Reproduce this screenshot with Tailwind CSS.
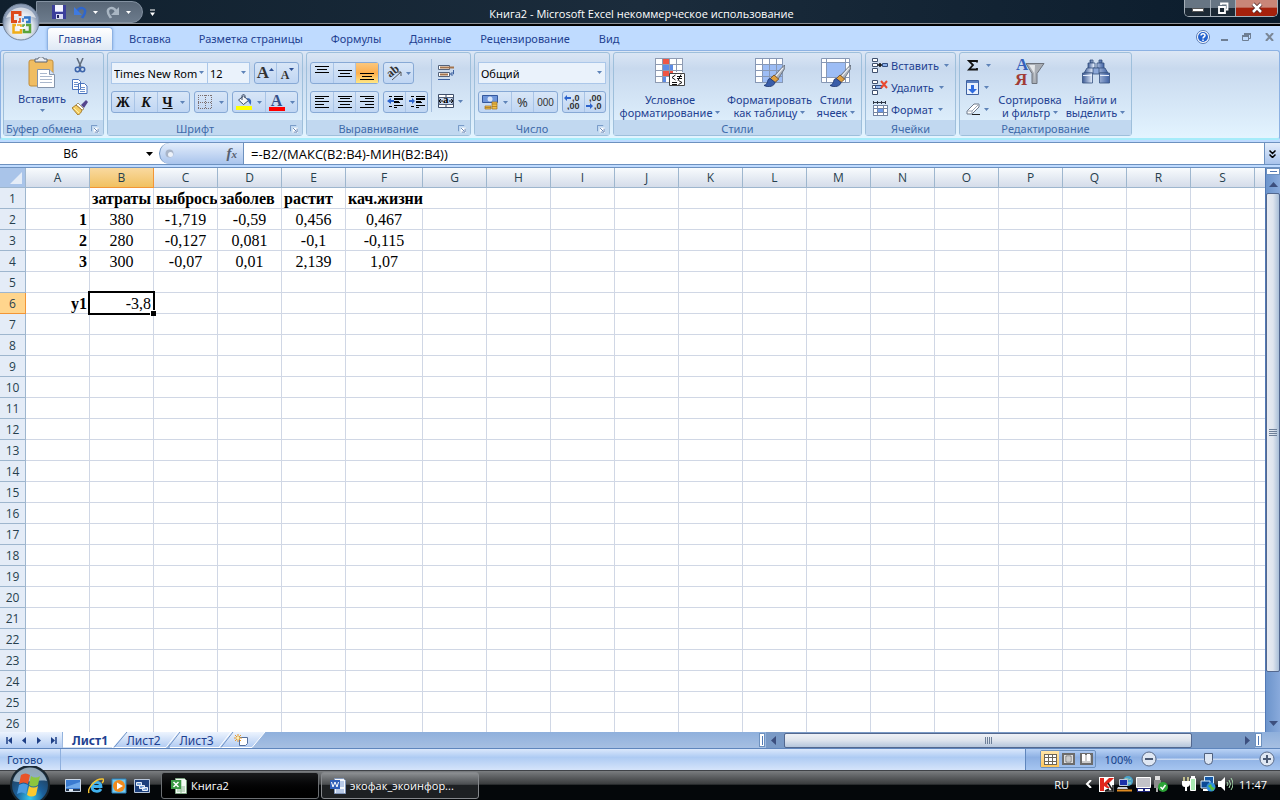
<!DOCTYPE html>
<html lang="ru">
<head>
    <meta charset="UTF-8">
    <meta name="viewport" content="width=device-width, initial-scale=1.0">
    <title>Книга2 - Microsoft Excel</title>
    <script src="https://cdn.jsdelivr.net/npm/@tailwindcss/browser@4"></script>
</head>
<body class="h-screen flex flex-col overflow-hidden bg-black font-['Noto_Sans',sans-serif] text-[11px] leading-[13px] text-[#1e4191]">

    <!-- shared icons -->
    <svg class="hidden">
        <defs>
            <symbol id="arrow" viewBox="0 0 5 3"><path d="M0 0h5L2.500 3z" fill="currentColor"/></symbol>
            <symbol id="launcher" viewBox="0 0 9 9"><path d="M.5 7V.5H7" fill="none" stroke="#6b8fc0"/><path d="M3 3h6v6H3z" fill="#fff"/><path d="M3.500 3.500l3.500 3.500M8 4v4H4" fill="none" stroke="#5579ae"/></symbol>
            <symbol id="brush" viewBox="0 0 20 21"><path d="M19.500 0L9 11l4 3L20 3z" fill="#aeb4bd" stroke="#5f6875" stroke-width=".8"/><path d="M18 3L11 11" stroke="#f2f4f7"/><path d="M9.500 9.500L6 13l4 4 4-3.500z" fill="#dfa03f" stroke="#6d4720" stroke-width=".8"/><path d="M6 13c-4 0-1 5-6 6.500 5 2.500 10 .500 10.500-3z" fill="#3a5da8" stroke="#1f376f" stroke-width=".8"/></symbol>
            <symbol id="cells" viewBox="0 0 16 15"><path d="M.5.5h5v3h-5zM.5 5.500h5v3h-5zM.5 10.500h5v4h-5z" fill="#fff" stroke="#40516e"/></symbol>
        </defs>
    </svg>

    <!-- title bar -->
    <header class="relative flex h-[26px] shrink-0 border-b-2 border-black bg-linear-to-r from-[#10202e] via-[#1b2c3c] to-[#0b1c2c]">
        <div class="flex h-[24px] w-full items-start border-b border-[#8d9299]">
            <div class="ml-[36px] mt-px flex h-[22px] w-[107px] items-center rounded-r-full border border-[#8391a1] bg-linear-to-b from-[#596777] to-[#6c7b8c] pl-[15px] text-white">
                <button aria-label="Сохранить">
                    <svg width="14" height="14"><path d="M0 0h14v14H0z" fill="#3c3f9c"/><path d="M3 0h8v7H3z" fill="#f4f5ff"/><path d="M3 6h8v1H3z" fill="#b9bce9"/><path d="M4 9h7v5H4z" fill="#d9dbf6"/><path d="M5 10h2v3H5z" fill="#22245e"/></svg>
                </button>
                <button aria-label="Отменить" class="ml-[8px] flex items-center gap-[6px]">
                    <svg width="13" height="13"><path d="M3 5C6 0 12 2 11 6c0 3-2 4-3 6" fill="none" stroke="#2f66cc" stroke-width="2.500"/><path d="M0 1v8h8z" fill="#3f7ae0"/></svg>
                    <svg width="5" height="3"><use href="#arrow"/></svg>
                </button>
                <button aria-label="Вернуть" class="ml-[8px] flex items-center gap-[7px]">
                    <svg width="13" height="13"><path d="M10 5C7 0 1 2 2 6c0 3 2 4 3 6" fill="none" stroke="#a9b6c3" stroke-width="2.500"/><path d="M13 1v8H5z" fill="#a9b6c3"/></svg>
                    <svg width="5" height="3"><use href="#arrow"/></svg>
                </button>
            </div>
            <button aria-label="Настройка панели" class="ml-[7px] mt-[9px]"><svg width="5" height="7"><path d="M0 1h5" stroke="#fff"/><path d="M0 3.500h5L2.500 7z" fill="#fff"/></svg></button>
            <h1 class="min-w-0 flex-1 truncate pt-[6px] pr-[56px] text-center text-[11px] leading-[16px] text-white font-['Open_Sans',sans-serif]">Книга2 - Microsoft Excel некоммерческое использование</h1>
            <div class="mr-[2px] flex h-[17px] overflow-hidden rounded-b-[5px] border border-t-0 border-[#a5afb8]">
                <button aria-label="Свернуть" class="flex w-[26px] items-center justify-center border-r border-[#a5afb8] bg-linear-to-b from-[#677583] from-50% to-[#1c2935] to-50%"><svg width="12" height="14"><path d="M.5 7.500h11v3H.5z" fill="#fff" stroke="#555"/></svg></button>
                <button aria-label="Восстановить" class="flex w-[25px] items-center justify-center border-r border-[#a5afb8] bg-linear-to-b from-[#677583] from-50% to-[#1c2935] to-50%"><svg width="12" height="12"><path d="M4 3V1.500h6.500v6H9M2 5h6v6H2z" fill="none" stroke="#fff" stroke-width="1.800"/></svg></button>
                <button aria-label="Закрыть" class="flex w-[41px] items-center justify-center bg-linear-to-b from-[#c98678] from-45% to-[#a5210c] to-50%"><svg width="12" height="12"><path d="M2 2l8 8M10 2l-8 8" stroke="#4b2020" stroke-width="4"/><path d="M2 2l8 8M10 2l-8 8" stroke="#fff" stroke-width="2.500"/></svg></button>
            </div>
        </div>
        <button aria-label="Кнопка Office" class="absolute left-[2px] top-[3px] z-20">
            <svg width="38" height="38" viewBox="0 0 38 38">
                <defs><radialGradient id="orb" cx=".5" cy=".65"><stop offset="0" stop-color="#fff"/><stop offset=".65" stop-color="#dfe5ee"/><stop offset="1" stop-color="#8c9db6"/></radialGradient></defs>
                <circle cx="19" cy="19" r="18" fill="url(#orb)" stroke="#75869e"/>
                <path d="M4 15C9 1 29 1 34 15c-8-3-22-3-30 0z" fill="#fff" opacity=".6"/>
                <g fill="none" stroke-width="3">
                    <path d="M18 13V9.500h-7.500v9H15" stroke="#dd4b1c"/><path d="M22 14.500h5.500V19H24" stroke="#3277c9" stroke-width="2.500"/>
                    <path d="M14 22h-2.500v7.500H19V26" stroke="#f0ad18" stroke-width="2.500"/><path d="M24 22h4v7h-6v-3" stroke="#5aa43a" stroke-width="2.500"/>
                    <path d="M18 15v4h-2" stroke="#dd4b1c" stroke-width="1.500"/><path d="M21 15v4" stroke="#3277c9" stroke-width="1.500"/><path d="M15 22h4v2" stroke="#f0ad18" stroke-width="1.500"/><path d="M21 24v-2h2" stroke="#5aa43a" stroke-width="1.500"/>
                </g>
            </svg>
        </button>
    </header>

    <!-- ribbon tabs -->
    <nav class="flex h-[24px] shrink-0 items-end bg-[#bfdbff] pl-[47px]">
        <a href="#" class="h-[23px] w-[66px] rounded-t-[4px] border border-b-0 border-[#8db2e3] bg-linear-to-b from-white to-[#dfe9f5] pt-[4px] text-center shadow-[0_0_3px_#7fa8e0]">Главная</a>
        <a href="#" class="h-[23px] pt-[5px] pl-[16px]">Вставка</a>
        <a href="#" class="h-[23px] pt-[5px] pl-[28px]">Разметка страницы</a>
        <a href="#" class="h-[23px] pt-[5px] pl-[28px]">Формулы</a>
        <a href="#" class="h-[23px] pt-[5px] pl-[28px]">Данные</a>
        <a href="#" class="h-[23px] pt-[5px] pl-[29px]">Рецензирование</a>
        <a href="#" class="h-[23px] pt-[5px] pl-[29px]">Вид</a>
        <div class="ml-auto flex h-[23px] items-center pr-[6px] pb-[3px]">
            <button aria-label="Справка"><svg width="14" height="14"><circle cx="7" cy="7" r="6.500" fill="#fff" stroke="#5679b4"/><circle cx="7" cy="7" r="5" fill="#2563cf"/><path d="M5 5.500C5 3 9 3 9 5.500 9 7 7 6.500 7 8.500M7 9.500v1.500" fill="none" stroke="#fff" stroke-width="1.500"/></svg></button>
            <button aria-label="Свернуть книгу" class="ml-[11px]"><svg width="7" height="10"><path d="M0 8h7" stroke="#6f7f94" stroke-width="2"/></svg></button>
            <button aria-label="Восстановить книгу" class="ml-[14px]"><svg width="9" height="8"><path d="M2.500 2V.5h6v5H7M.5 2.500h6v5h-6z" fill="none" stroke="#6f7f94"/><path d="M2 1h7M0 3h7" stroke="#6f7f94" stroke-width="2"/></svg></button>
            <button aria-label="Закрыть книгу" class="ml-[14px]"><svg width="9" height="8"><path d="M1 0l7 8M8 0L1 8" stroke="#7b8796" stroke-width="2"/></svg></button>
        </div>
    </nav>

    <!-- ribbon -->
    <main class="flex min-h-0 flex-1 flex-col bg-[#bfdbff]">
    <div class="flex h-[90px] shrink-0 gap-[3px] rounded-[3px] border border-[#8db2e3] border-b-2 border-b-[#a5ecfa] bg-linear-to-b from-[#dce7f5] via-[#c8d9ee] via-20% to-[#e3f4ff] px-[2px] pt-px pb-[2px]">

        <section class="flex w-[101px] flex-col rounded-[3px] border border-[#9ebfdb]">
            <div class="flex flex-1 pt-[4px]">
                <button class="flex w-[76px] flex-col items-center">
                    <svg width="28" height="32"><rect x="1" y="3" width="24" height="26" rx="2" fill="#f0bd62" stroke="#c08d3d"/><path d="M7 5V2h3c0-3 6-3 6 0h3v3z" fill="#e9ecf1" stroke="#5b6574"/><path d="M9.500 12.500h12l5 5v13h-17z" fill="#fff" stroke="#8494ab"/><path d="M21.500 12.500v5h5" fill="#d6e2f3" stroke="#8494ab"/><path d="M12 16.500h7M12 19.500h12M12 22.500h12M12 25.500h12" stroke="#aab8cd"/></svg>
                    <span class="mt-[3px]">Вставить</span>
                    <svg class="mt-[4px] text-[#5e83b8]" width="5" height="3"><use href="#arrow"/></svg>
                </button>
                <div class="-ml-[8px] flex flex-col items-center gap-[6px] pt-px">
                    <button aria-label="Вырезать"><svg width="12" height="15"><path d="M3 0l4 9M9 0L5 9" stroke="#606c7c" stroke-width="1.500"/><circle cx="3.500" cy="11.500" r="2.200" fill="none" stroke="#3c64aa" stroke-width="1.500"/><circle cx="8.500" cy="11.500" r="2.200" fill="none" stroke="#3c64aa" stroke-width="1.500"/></svg></button>
                    <button aria-label="Копировать"><svg width="16" height="15"><path d="M.5.500h6l2 2v8h-8zM6.500 4.500h6l2.500 2.500v7.500H6.500z" fill="#fff" stroke="#4a74bd"/><path d="M2 3.500h4M2 5.500h4M2 7.500h4M8 8.500h5M8 10.500h5M8 12.500h5" stroke="#6e92cd"/></svg></button>
                    <button aria-label="Формат по образцу"><svg width="16" height="15"><path d="M9 5l5-5 2 2-4 6z" fill="#54458c"/><path d="M6 3l6 6-2 1-6-5z" fill="#fff" stroke="#8a733a" stroke-width=".7"/><path d="M4 5l6 5c-1 3-2 4-4 5L0 8z" fill="#f4ce65" stroke="#a77f2f"/><path d="M2 8l5 5" stroke="#fff2a8"/></svg></button>
                </div>
            </div>
            <footer class="flex h-[15px] items-center justify-between bg-[#c1d8f0] pt-[2px] pl-[2px] pr-[4px] text-[#3e6aaa]"><span>Буфер обмена</span><button aria-label="Параметры буфера"><svg width="8" height="8"><use href="#launcher"/></svg></button></footer>
        </section>

        <section class="flex w-[196px] flex-col rounded-[3px] border border-[#9ebfdb]">
            <div class="flex flex-1 flex-col gap-[7px] px-[3px] pt-[9px]">
                <div class="flex gap-[4px]">
                    <div class="flex">
                        <label class="relative"><select aria-label="Шрифт" class="h-[22px] w-[97px] appearance-none border border-[#abc7e9] bg-[#eaf2fb] pl-[2px] text-black"><option>Times New Rom</option></select><svg class="pointer-events-none absolute right-[4px] top-[9px] text-[#5e83b8]" width="5" height="3"><use href="#arrow"/></svg></label>
                        <label class="relative"><select aria-label="Размер шрифта" class="h-[22px] w-[42px] appearance-none border border-l-0 border-[#abc7e9] bg-[#eaf2fb] pl-[2px] text-black"><option>12</option></select><svg class="pointer-events-none absolute right-[4px] top-[9px] text-[#5e83b8]" width="5" height="3"><use href="#arrow"/></svg></label>
                    </div>
                    <div class="flex h-[22px] divide-x divide-[#a9c4e6] rounded-[3px] border border-[#87a9d5] bg-linear-to-b from-[#d8e6f7] to-[#c0d6f3] font-['Liberation_Serif',serif] font-bold text-[#333]">
                        <button aria-label="Увеличить размер" class="flex w-[22px] items-center justify-center text-[17px] leading-[20px]">A<svg class="mb-[8px]" width="5" height="3"><path d="M0 3h5L2.500 0z" fill="#2c4f94"/></svg></button>
                        <button aria-label="Уменьшить размер" class="flex w-[21px] items-center justify-center text-[12px]"><span class="mt-[4px]">A</span><svg class="mb-[8px]" width="5" height="3"><path d="M0 0h5L2.500 3z" fill="#2c4f94"/></svg></button>
                    </div>
                </div>
                <div class="flex gap-[4px]">
                    <div class="flex h-[22px] w-[79px] divide-x divide-[#a9c4e6] rounded-[3px] border border-[#87a9d5] bg-linear-to-b from-[#d8e6f7] to-[#c0d6f3] font-['Liberation_Serif',serif] text-[14px] font-bold text-[#111]">
                        <button class="w-[23px]">Ж</button>
                        <button class="w-[23px] italic">К</button>
                        <button class="flex flex-1 items-center justify-center gap-[7px]"><u>Ч</u><svg class="text-[#5e83b8]" width="5" height="3"><use href="#arrow"/></svg></button>
                    </div>
                    <button aria-label="Границы" class="flex h-[22px] w-[34px] items-center justify-center gap-[7px] rounded-[3px] border border-[#87a9d5] bg-linear-to-b from-[#d8e6f7] to-[#c0d6f3]"><svg width="14" height="14"><path d="M.5 0v14M7.500 0v14M13.500 0v14M0 .5h14M0 7.500h14M0 13.500h14" stroke="#7b6f70" stroke-dasharray="1 1"/></svg><svg class="text-[#5e83b8]" width="5" height="3"><use href="#arrow"/></svg></button>
                    <div class="flex h-[22px] w-[66px] divide-x divide-[#a9c4e6] rounded-[3px] border border-[#87a9d5] bg-linear-to-b from-[#d8e6f7] to-[#c0d6f3]">
                        <button aria-label="Цвет заливки" class="flex w-[33px] items-center justify-center gap-[5px]"><svg width="16" height="16"><path d="M2.500 6l5-4 5 4.500-5 4z" fill="#f4f7fb" stroke="#3c4c67"/><path d="M6 6V2c0-2 3-2 3 0v2" fill="none" stroke="#3c4c67"/><path d="M11 4c4 0 5 3 3.500 7L12 7z" fill="#3c69b6"/><path d="M0 12h16v4H0z" fill="#ff0"/></svg><svg class="text-[#5e83b8]" width="5" height="3"><use href="#arrow"/></svg></button>
                        <button aria-label="Цвет текста" class="flex flex-1 items-center justify-center gap-[5px]"><span class="h-[17px] w-[16px] border-b-4 border-[#f00] text-center font-['Liberation_Serif',serif] text-[16px] leading-[13px] font-bold text-[#365088]">A</span><svg class="text-[#5e83b8]" width="5" height="3"><use href="#arrow"/></svg></button>
                    </div>
                </div>
            </div>
            <footer class="flex h-[15px] items-center bg-[#c1d8f0] pt-[2px] pr-[4px] text-[#3e6aaa]"><span class="flex-1 pr-[8px] text-center">Шрифт</span><button aria-label="Параметры шрифта"><svg width="8" height="8"><use href="#launcher"/></svg></button></footer>
        </section>

        <section class="flex w-[165px] flex-col rounded-[3px] border border-[#9ebfdb]">
            <div class="flex flex-1 px-[3px] pt-[9px]">
                <div class="flex w-[121px] flex-col gap-[7px]">
                    <div class="flex gap-[4px]">
                        <div class="flex h-[22px] w-[69px] divide-x divide-[#a9c4e6] rounded-[3px] border border-[#87a9d5] bg-linear-to-b from-[#d8e6f7] to-[#c0d6f3]">
                            <button aria-label="По верхнему краю" class="flex flex-1 justify-center pt-[3px]"><svg width="14" height="8"><path d="M0 .5h14M2 3.500h10M0 6.500h14" stroke="#000"/></svg></button>
                            <button aria-label="По середине" class="flex flex-1 justify-center pt-[7px]"><svg width="14" height="8"><path d="M0 .5h14M2 3.500h10M0 6.500h14" stroke="#000"/></svg></button>
                            <button aria-label="По нижнему краю" class="flex flex-1 justify-center bg-linear-to-b from-[#fbc77c] via-[#fdae4b] to-[#ffe784] pt-[10px]"><svg width="14" height="8"><path d="M0 .5h14M2 3.500h10M0 6.500h14" stroke="#000"/></svg></button>
                        </div>
                        <button aria-label="Ориентация" class="flex h-[22px] w-[31px] items-center justify-center gap-[3px] rounded-[3px] border border-[#87a9d5] bg-linear-to-b from-[#d8e6f7] to-[#c0d6f3]"><svg class="overflow-visible" width="16" height="16"><text x="1" y="11" transform="rotate(-38 5 9)" font-family="Liberation Serif" font-size="12" font-weight="bold" fill="#333">ab</text><path d="M5 15L14 7m-4 0h4v4" fill="none" stroke="#555"/></svg><svg class="text-[#5e83b8]" width="5" height="3"><use href="#arrow"/></svg></button>
                    </div>
                    <div class="flex gap-[4px]">
                        <div class="flex h-[22px] w-[69px] divide-x divide-[#a9c4e6] rounded-[3px] border border-[#87a9d5] bg-linear-to-b from-[#d8e6f7] to-[#c0d6f3]">
                            <button aria-label="По левому краю" class="flex flex-1 items-center justify-center"><svg width="14" height="12"><path d="M0 .5h14M0 2.500h9M0 5.500h14M0 8.500h9M0 11.500h14" stroke="#000"/></svg></button>
                            <button aria-label="По центру" class="flex flex-1 items-center justify-center"><svg width="14" height="12"><path d="M0 .5h14M2 2.500h10M0 5.500h14M2 8.500h10M0 11.500h14" stroke="#000"/></svg></button>
                            <button aria-label="По правому краю" class="flex flex-1 items-center justify-center"><svg width="14" height="12"><path d="M0 .5h14M5 2.500h9M0 5.500h14M5 8.500h9M0 11.500h14" stroke="#000"/></svg></button>
                        </div>
                        <div class="flex h-[22px] w-[45px] divide-x divide-[#a9c4e6] rounded-[3px] border border-[#87a9d5] bg-linear-to-b from-[#d8e6f7] to-[#c0d6f3]">
                            <button aria-label="Уменьшить отступ" class="flex flex-1 items-center justify-center"><svg width="16" height="14"><path d="M2 1.500h3M7 1.500h9M7 4.500h9M7 7.500h6M2 11.500h3M7 10.500h9M7 12.500h3" stroke="#000"/><path d="M7 4h9M7 7h5" stroke="#000" stroke-width="2"/><path d="M0 6l4-3v2h3v2H4v2z" fill="#2c63cc"/></svg></button>
                            <button aria-label="Увеличить отступ" class="flex flex-1 items-center justify-center"><svg width="16" height="14"><path d="M2 1.500h3M7 1.500h9M7 4.500h9M7 7.500h6M2 11.500h3M7 10.500h9M7 12.500h3" stroke="#000"/><path d="M7 4h9M7 7h5" stroke="#000" stroke-width="2"/><path d="M6 6L3 3v2H0v2h3v2z" fill="#2c63cc"/></svg></button>
                        </div>
                    </div>
                </div>
                <div class="-mt-[3px] mb-[8px] flex flex-1 flex-col gap-[14px] border-l border-[#a5bedd] pt-[5px] pl-[6px]">
                    <button aria-label="Перенос текста"><svg width="17" height="16"><path d="M.5 1.500h11v4H.5zM.5 8.500h11v4H.5z" fill="#fff" stroke="#54627a"/><path d="M2 3.500h14M2 10.500h8" stroke="#a4744d" stroke-width="2"/><path d="M0 15.500h12M15.500 6v4h-3m2-2l-2 2 2 2" fill="none" stroke="#3d61a0"/></svg></button>
                    <button aria-label="Объединить и поместить в центре" class="flex items-center gap-[4px]"><svg width="16" height="14"><path d="M.5.5h15v13H.5zM8 0v14" fill="#fff" stroke="#3f4f6b"/><path d="M1 3.500h14v7H1z" fill="#c7daf5" stroke="#54627a"/><path d="M1 7h4M11 7h4M3 5L1 7l2 2M13 5l2 2-2 2" fill="none" stroke="#111"/><text x="5" y="9" font-family="Liberation Serif" font-size="11" font-weight="bold">a</text></svg><svg class="text-[#5e83b8]" width="5" height="3"><use href="#arrow"/></svg></button>
                </div>
            </div>
            <footer class="flex h-[15px] items-center bg-[#c1d8f0] pt-[2px] pr-[4px] text-[#3e6aaa]"><span class="flex-1 pr-[8px] text-center">Выравнивание</span><button aria-label="Параметры выравнивания"><svg width="8" height="8"><use href="#launcher"/></svg></button></footer>
        </section>

        <section class="flex w-[136px] flex-col rounded-[3px] border border-[#9ebfdb]">
            <div class="flex flex-1 flex-col gap-[7px] px-[3px] pt-[9px]">
                <label class="relative flex"><select aria-label="Числовой формат" class="h-[22px] w-full appearance-none border border-[#abc7e9] bg-[#eaf2fb] pl-[2px] text-black"><option>Общий</option></select><svg class="pointer-events-none absolute right-[4px] top-[9px] text-[#5e83b8]" width="5" height="3"><use href="#arrow"/></svg></label>
                <div class="flex gap-[4px]">
                    <div class="flex h-[22px] w-[80px] divide-x divide-[#a9c4e6] rounded-[3px] border border-[#87a9d5] bg-linear-to-b from-[#d8e6f7] to-[#c0d6f3] text-[#333]">
                        <button aria-label="Финансовый формат" class="flex w-[33px] items-center justify-center gap-[5px]"><svg width="16" height="16"><path d="M.5 1.500h15v7H.5z" fill="#6f96da" stroke="#34589e"/><circle cx="8" cy="5" r="2.500" fill="#d8e5fa"/><path d="M10 8h5v7h-5zM3 12h6v3H3z" fill="#f1c04a" stroke="#a0701c" stroke-width=".7"/><path d="M10 10h5M10 12.500h5M3 13.500h6" stroke="#a0701c" stroke-width=".7"/></svg><svg class="text-[#5e83b8]" width="5" height="3"><use href="#arrow"/></svg></button>
                        <button class="w-[22px] text-[13px]">%</button>
                        <button class="flex-1 font-['Liberation_Sans',sans-serif] text-[10px]">000</button>
                    </div>
                    <div class="flex h-[22px] flex-1 divide-x divide-[#a9c4e6] rounded-[3px] border border-[#87a9d5] bg-linear-to-b from-[#d8e6f7] to-[#c0d6f3]">
                        <button aria-label="Увеличить разрядность" class="flex flex-1 items-center justify-center"><svg width="18" height="16" font-family="Liberation Sans" font-size="9" font-weight="bold" fill="#333"><path d="M0 4l3-3v2h4v2H3v2z" fill="#2c63cc"/><text x="8" y="7">,0</text><text x="3" y="15">,00</text></svg></button>
                        <button aria-label="Уменьшить разрядность" class="flex flex-1 items-center justify-center"><svg width="18" height="16" font-family="Liberation Sans" font-size="9" font-weight="bold" fill="#333"><path d="M7 12L4 9v2H0v2h4v2z" fill="#2c63cc"/><text x="3" y="7">,00</text><text x="8" y="15">,0</text></svg></button>
                    </div>
                </div>
            </div>
            <footer class="flex h-[15px] items-center bg-[#c1d8f0] pt-[2px] pr-[4px] text-[#3e6aaa]"><span class="flex-1 pr-[8px] text-center">Число</span><button aria-label="Параметры числа"><svg width="8" height="8"><use href="#launcher"/></svg></button></footer>
        </section>

        <section class="flex w-[249px] flex-col rounded-[3px] border border-[#9ebfdb]">
            <div class="flex flex-1 pt-[5px] whitespace-nowrap">
                <button class="flex w-[112px] flex-col items-center">
                    <svg width="30" height="29"><path d="M.5.5h27v24H.5z" fill="#fff"/><path d="M7 0h7v6H7zM7 12h11v6H7z" fill="#ef5544"/><path d="M7 6h11v6H7zM7 18h4v7H7z" fill="#5d8ce5"/><path d="M0 .5h28M0 6.500h28M0 12.500h28M0 18.500h28M0 24.500h14M.5 0v25M7.500 0v25M14.500 0v25M21.500 0v14M27.500 0v14" stroke="#8e9bb2"/><path d="M14.500 15.500h15v12h-15z" fill="#fff" stroke="#444"/><path d="M20.500 17l-3.500 2.500 3.500 2.500M17 24.500h5M17 26.500h5M22 18.500h5M22 20.500h5M26 16.500l-3 6M23.500 22.500l3.500 2-3.500 2" fill="none" stroke="#111"/></svg>
                    <span class="mt-[6px]">Условное</span>
                    <span class="flex items-center gap-[3px]">форматирование<svg class="text-[#5e83b8]" width="5" height="3"><use href="#arrow"/></svg></span>
                </button>
                <button class="flex w-[87px] flex-col items-center">
                    <svg width="30" height="29"><path d="M0 0h28v25H0z" fill="#fff"/><path d="M7 6h21v19H7z" fill="#9dbdf5"/><path d="M0 .5h28M0 6.500h28M0 12.500h28M0 18.500h28M0 24.500h28M.5 0v25M7.500 0v25M14.500 0v25M21.500 0v25M27.500 0v25" stroke="#8798b5"/><use href="#brush" x="9" y="7" width="21" height="22"/></svg>
                    <span class="mt-[6px]">Форматировать</span>
                    <span class="flex items-center gap-[3px]">как таблицу<svg class="text-[#5e83b8]" width="5" height="3"><use href="#arrow"/></svg></span>
                </button>
                <button class="flex w-[46px] flex-col items-center">
                    <svg width="30" height="29"><path d="M.5.5h28v24H.5z" fill="#fff" stroke="#8798b5"/><path d="M5.500 4.500h19v15h-19z" fill="#9dbdf5"/><path d="M5.500 0v25M24.500 0v25M0 4.500h28M0 19.500h28" stroke="#8798b5"/><use href="#brush" x="9" y="7" width="21" height="22"/></svg>
                    <span class="mt-[6px]">Стили</span>
                    <span class="flex items-center gap-[3px]">ячеек<svg class="text-[#5e83b8]" width="5" height="3"><use href="#arrow"/></svg></span>
                </button>
            </div>
            <footer class="h-[15px] bg-[#c1d8f0] pt-[2px] text-center text-[#3e6aaa]">Стили</footer>
        </section>

        <section class="flex w-[91px] flex-col rounded-[3px] border border-[#9ebfdb]">
            <div class="flex flex-1 flex-col gap-[6px] pt-[4px] pl-[6px]">
                <button class="flex h-[16px] items-center gap-[3px]"><svg width="16" height="15"><use href="#cells" width="16" height="15"/><path d="M5.500 7h4.500M8 5v4" stroke="#111" stroke-width="1.500"/><path d="M10.500 5.500h5v3h-5z" fill="#8eb1e8" stroke="#304d80"/></svg>Вставить<svg class="ml-[2px] text-[#5e83b8]" width="5" height="3"><use href="#arrow"/></svg></button>
                <button class="flex h-[16px] items-center gap-[3px]"><svg width="16" height="15"><use href="#cells" width="16" height="15"/><path d="M3.500 5.500h6v3h-6z" fill="#8eb1e8" stroke="#304d80"/><path d="M9 1l6 7M15 1L9 8" stroke="#e9492f" stroke-width="2"/></svg>Удалить<svg class="ml-[2px] text-[#5e83b8]" width="5" height="3"><use href="#arrow"/></svg></button>
                <button class="flex h-[16px] items-center gap-[3px]"><svg width="16" height="16"><path d="M1.500 4.500h14v10h-14z" fill="#fff"/><path d="M6 8h5v3H6z" fill="#6c9aec"/><path d="M1 4.500h15M1 7.500h15M1 11.500h15M1 14.500h15M1.500 4v11M5.500 4v11M11.500 4v11M15.500 4v11" stroke="#7486a3"/><path d="M1 1.500h13M1.500 0v3M5.500 0v3M9.500 0v3M13.500 0v3" stroke="#2d3747"/></svg>Формат<svg class="ml-[2px] text-[#5e83b8]" width="5" height="3"><use href="#arrow"/></svg></button>
            </div>
            <footer class="h-[15px] bg-[#c1d8f0] pt-[2px] text-center text-[#3e6aaa]">Ячейки</footer>
        </section>

        <section class="flex w-[173px] flex-col rounded-[3px] border border-[#9ebfdb]">
            <div class="flex flex-1 whitespace-nowrap">
                <div class="flex w-[35px] flex-col gap-[6px] pt-[4px] pl-[6px]">
                    <button aria-label="Сумма" class="flex h-[16px] items-center gap-[6px]"><svg width="14" height="12"><path d="M11 3.500V2H3l4 4-4 4.500h8V9" fill="none" stroke="#111" stroke-width="1.800"/></svg><svg class="text-[#5e83b8]" width="5" height="3"><use href="#arrow"/></svg></button>
                    <button aria-label="Заполнить" class="flex h-[16px] items-center gap-[5px]"><svg width="13" height="15"><path d="M.5.500h12v14H.5z" fill="#e8f0fd" stroke="#3f61a0"/><path d="M1 1h11v2H1z" fill="#5a7fc0"/><path d="M5 5h3v4h3l-4.500 4.500L2 9h3z" fill="#2e6be0"/></svg><svg class="text-[#5e83b8]" width="5" height="3"><use href="#arrow"/></svg></button>
                    <button aria-label="Очистить" class="flex h-[16px] items-center gap-[4px]"><svg width="14" height="13"><path d="M1 8l7-7h5v3l-7 7H1z" fill="#fff" stroke="#6f7a8b"/><path d="M1 8h5l7-7M6 8v3" fill="none" stroke="#9aa5b5"/><path d="M6 11.500h8" stroke="#222"/></svg><svg class="text-[#5e83b8]" width="5" height="3"><use href="#arrow"/></svg></button>
                </div>
                <button class="flex w-[70px] flex-col items-center pt-[5px]">
                    <svg class="overflow-visible" width="30" height="29"><path d="M11 5.500h18l-7 10v10h-5V15.500z" fill="#a9aeb5" stroke="#6d737c"/><path d="M14 7h6l-1 17V15z" fill="#e4e7ea"/><text x="1" y="12" font-family="Liberation Serif" font-size="17" font-weight="bold" fill="#3560ba">А</text><text x="0" y="27" font-family="Liberation Serif" font-size="17" font-weight="bold" fill="#a13c36">Я</text></svg>
                    <span class="mt-[6px]">Сортировка</span>
                    <span class="flex items-center gap-[3px]">и фильтр<svg class="text-[#5e83b8]" width="5" height="3"><use href="#arrow"/></svg></span>
                </button>
                <button class="flex w-[61px] flex-col items-center pt-[5px]">
                    <svg width="28" height="29">
                        <defs><linearGradient id="tube"><stop stop-color="#3c5a94"/><stop offset=".35" stop-color="#dde8f9"/><stop offset="1" stop-color="#3f61a3"/></linearGradient></defs>
                        <g fill="url(#tube)" stroke="#35507f" stroke-width=".8">
                            <path d="M8 2h3v3H8zM17 2h3v3h-3z"/><path d="M6 5h7v6H6zM15 5h7v6h-7z"/><path d="M5 10h8v5H2zM15 10h8l3 5H15z"/><path d="M.5 15h10v10H.5zM17.500 15h10v10h-10z"/><path d="M11 10h6v6h-6z" fill="#8ba7d8"/>
                        </g>
                        <path d="M1 17.500h9M18 17.500h9" stroke="#e4edfb"/>
                    </svg>
                    <span class="mt-[6px]">Найти и</span>
                    <span class="flex items-center gap-[3px]">выделить<svg class="text-[#5e83b8]" width="5" height="3"><use href="#arrow"/></svg></span>
                </button>
            </div>
            <footer class="h-[15px] bg-[#c1d8f0] pt-[2px] text-center text-[#3e6aaa]">Редактирование</footer>
        </section>
    </div>

    <!-- formula bar -->
    <div class="mt-[2px] flex h-[23px] shrink-0 border-y border-[#6d91bf] bg-white font-['Open_Sans',sans-serif] text-[13px] text-black">
        <input aria-label="Имя" value="B6" class="w-[141px] bg-white text-center text-[12px]">
        <button aria-label="Список имён" class="w-[18px] pl-[5px]"><svg width="7" height="4"><path d="M0 0h7L3.500 4z"/></svg></button>
        <div class="flex w-[85px] items-center justify-between rounded-l-full border-r border-l border-[#6d91bf] bg-linear-to-b from-[#e3edfb] to-[#a9c4ec] pr-[6px] pl-[5px]">
            <svg width="9" height="9"><circle cx="4.500" cy="4.500" r="4" fill="#a9b5c8"/><circle cx="5.500" cy="5.500" r="2.500" fill="#eef3fa"/></svg>
            <button aria-label="Вставить функцию" class="font-['Liberation_Serif',serif] text-[15px] font-bold italic text-[#56606f]">f<span class="text-[11px]">x</span></button>
        </div>
        <input aria-label="Строка формул" value="=-B2/(МАКС(B2:B4)-МИН(B2:B4))" class="min-w-0 flex-1 bg-white pl-[7px]">
        <button aria-label="Развернуть" class="flex w-[16px] items-center justify-center border-l border-[#6d91bf] bg-linear-to-b from-[#e3edfb] to-[#a9c4ec]"><svg width="7" height="8"><path d="M.5.500l3 3 3-3M.5 4.500l3 3 3-3" fill="none" stroke="#000" stroke-width="1.500"/></svg></button>
    </div>

    <!-- sheet -->
    <div class="mt-[2px] flex min-h-0 flex-1 border-t border-[#6d91bf]">
        <div class="min-w-0 flex-1 overflow-hidden bg-white">
            <table class="w-[1319px] table-fixed border-separate border-spacing-0 font-['Liberation_Serif',serif] text-[16px] leading-[18px] text-black">
                <colgroup id="cols"></colgroup>
                <thead><tr id="letters" class="h-[20px] bg-linear-to-b from-[#f8fbfd] to-[#d3dbe9] font-['Open_Sans',sans-serif] text-[12px] leading-[19px] text-[#273f4d]"></tr></thead>
                <tbody id="rows"></tbody>
            </table>
        </div>
        <div class="flex w-[15px] flex-col items-center border-l border-[#5279b5] bg-linear-to-r from-[#6c94cb] to-[#89aadc]">
            <div class="flex h-[7px] w-full items-center justify-center border border-[#6d91bf] bg-white"><div class="h-px w-[7px] bg-[#5279b5]"></div></div>
            <button aria-label="Вверх" class="flex h-[18px] w-full items-center justify-center"><svg width="9" height="5"><path d="M0 5h9L4.500 0z" fill="#3c4f7e"/></svg></button>
            <div class="flex w-full flex-1 flex-col items-center justify-center gap-px rounded-[2px] border border-[#53688f] bg-linear-to-r from-[#e7ebf2] via-[#dfe5ee] to-[#a9bfd8]">
                <div class="h-px w-[8px] bg-[#6d7f98]"></div><div class="h-px w-[8px] bg-[#6d7f98]"></div><div class="h-px w-[8px] bg-[#6d7f98]"></div><div class="h-px w-[8px] bg-[#6d7f98]"></div>
            </div>
            <div class="h-[42px]"></div>
            <button aria-label="Вниз" class="flex h-[18px] w-full items-center justify-center"><svg width="9" height="5"><path d="M0 0h9L4.500 5z" fill="#3c4f7e"/></svg></button>
        </div>
    </div>

    <!-- sheet tabs -->
    <div class="flex h-[17px] shrink-0 border-b border-[#5f86bd] bg-linear-to-b from-[#8fb0dc] to-[#a6bfe2]">
        <div class="relative flex w-[270px] text-[12px] leading-[17px]">
            <svg class="absolute inset-0" width="270" height="16">
                <defs><linearGradient id="tabfill" x2="0" y2="1"><stop stop-color="#edf4fe"/><stop offset="1" stop-color="#b1cbf2"/></linearGradient></defs>
                <path d="M0 0h62v16H0z" fill="url(#tabfill)"/>
                <path d="M206 0h59l-13 15.500h-46z" fill="url(#tabfill)"/><path d="M265 0l-13 15.500h-40" fill="none" stroke="#fff"/>
                <path d="M170 0h61l-12 15.500h-49z" fill="url(#tabfill)"/><path d="M231 0l-12 15.500h-49" fill="none" stroke="#fff"/><path d="M233 0l-12 15.500" stroke="#6f92c5"/>
                <path d="M112 0h66l-12 15.500h-54z" fill="url(#tabfill)"/><path d="M178 0l-12 15.500h-54" fill="none" stroke="#fff"/><path d="M180 0l-12 15.500" stroke="#6f92c5"/>
                <path d="M63 0h63l-13 15.500H63z" fill="#fff"/><path d="M127 0l-13 15.500" stroke="#6f92c5"/>
            </svg>
            <div class="relative flex w-[63px] items-center justify-between px-[6px] text-[#1e3f86]">
                <button aria-label="Первый лист"><svg width="6" height="7"><path d="M1 0v7" stroke="currentColor" stroke-width="1.500"/><path d="M6 0v7L2 3.500z" fill="currentColor"/></svg></button>
                <button aria-label="Предыдущий лист"><svg width="4" height="7"><path d="M4 0v7L0 3.500z" fill="currentColor"/></svg></button>
                <button aria-label="Следующий лист"><svg width="4" height="7"><path d="M0 0v7l4-3.500z" fill="currentColor"/></svg></button>
                <button aria-label="Последний лист"><svg width="6" height="7"><path d="M5 0v7" stroke="currentColor" stroke-width="1.500"/><path d="M0 0v7l4-3.500z" fill="currentColor"/></svg></button>
            </div>
            <button class="relative w-[54px] font-bold">Лист1</button>
            <button class="relative w-[53px]">Лист2</button>
            <button class="relative w-[53px]">Лист3</button>
            <button aria-label="Вставить лист" class="relative flex w-[36px] items-center justify-center"><svg width="15" height="13"><path d="M5.500 3.500h8v6l-2 2H5.500z" fill="#fff" stroke="#56709d"/><path d="M4 0v8M0 4h8M1 1l6 6M7 1L1 7" stroke="#e89a2c"/><circle cx="4" cy="4" r="1.500" fill="#fff3b0"/></svg></button>
        </div>
        <div class="flex flex-1 justify-end">
            <div class="my-px mr-px flex w-[6px] items-center justify-center border border-[#6d91bf] bg-white"><div class="h-[9px] w-px bg-[#5279b5]"></div></div>
        </div>
        <div class="flex w-[489px] items-center bg-[#7a9ac6]">
            <button aria-label="Влево" class="w-[18px] pl-[5px]"><svg width="5" height="9"><path d="M5 0v9L0 4.500z" fill="#3c4f7e"/></svg></button>
            <div class="flex h-[15px] w-[408px] items-center justify-center gap-px rounded-[2px] border border-[#53688f] bg-linear-to-b from-[#eef1f6] via-[#dde3ec] to-[#b5c6dc]">
                <div class="h-[7px] w-px bg-[#6d7f98]"></div><div class="h-[7px] w-px bg-[#6d7f98]"></div><div class="h-[7px] w-px bg-[#6d7f98]"></div><div class="h-[7px] w-px bg-[#6d7f98]"></div>
            </div>
            <button aria-label="Вправо" class="ml-auto mr-[5px]"><svg width="5" height="9"><path d="M0 0v9l5-4.500z" fill="#3c4f7e"/></svg></button>
        </div>
        <div class="flex w-[25px]"><div class="my-px flex w-[7px] items-center justify-center border border-[#6d91bf] bg-white"><div class="h-[9px] w-px bg-[#5279b5]"></div></div></div>
    </div>

    <!-- status bar -->
    <div class="flex h-[21px] shrink-0 items-center bg-linear-to-b from-[#dbe8fb] via-[#aecbf3] via-40% to-[#d5e4fa]">
        <span class="flex h-full w-[61px] items-center border-r border-[#8fb0de] pb-px pl-[7px] text-[#15428b]">Готово</span>
        <div class="ml-auto flex h-full w-[255px] items-center border-l border-[#5f86bd] bg-linear-to-b from-[#b9d2f5] via-[#8db0e3] via-40% to-[#a6c5f0] pb-px pl-[14px]">
            <div class="flex h-[18px] rounded-[2px] border border-[#6d91bf]">
                <button aria-label="Обычный" class="flex w-[18px] items-center justify-center bg-linear-to-b from-[#ffe5a8] to-[#fdc65a]"><svg width="13" height="11"><path d="M.5.5h12v10H.5z" fill="#fff"/><path d="M0 .5h13M0 3.500h13M0 7.500h13M0 10.500h13M.5 0v11M4.500 0v11M8.500 0v11M12.500 0v11" stroke="#6b6558"/></svg></button>
                <button aria-label="Разметка страницы" class="flex w-[18px] items-center justify-center"><svg width="13" height="12"><path d="M1 1h11v10H1z" fill="#ddd" stroke="#6c6c6c" stroke-width="2"/><path d="M4 3h5v6H4z" fill="#fff" stroke="#777"/><path d="M5 5h3M5 7h3" stroke="#999"/></svg></button>
                <button aria-label="Страничный" class="flex w-[18px] items-center justify-center"><svg width="13" height="12"><path d="M1 1h11v10H1z" fill="#ccc" stroke="#6c6c6c" stroke-width="2"/><path d="M2 1h3v7H2zM7 1h3v7H7z" fill="#fff"/></svg></button>
            </div>
            <span class="w-[45px] text-center text-[#15428b]">100%</span>
            <button aria-label="Уменьшить"><svg width="16" height="16"><circle cx="8" cy="8" r="7" fill="#dfe7f3" stroke="#5b6c8a"/><path d="M4 8h8" stroke="#4d5b74" stroke-width="2"/></svg></button>
            <input type="range" aria-label="Масштаб" value="50" class="h-[14px] min-w-0 flex-1 appearance-none bg-linear-to-b from-transparent from-45% via-[#e6eefa] via-50% to-transparent to-60% [&::-webkit-slider-thumb]:h-[12px] [&::-webkit-slider-thumb]:w-[9px] [&::-webkit-slider-thumb]:appearance-none [&::-webkit-slider-thumb]:rounded-b-full [&::-webkit-slider-thumb]:border [&::-webkit-slider-thumb]:border-[#4f607f] [&::-webkit-slider-thumb]:bg-[#dde6f3]">
            <button aria-label="Увеличить" class="mr-[5px]"><svg width="16" height="16"><circle cx="8" cy="8" r="7" fill="#dfe7f3" stroke="#5b6c8a"/><path d="M4 8h8M8 4v8" stroke="#4d5b74" stroke-width="2"/></svg></button>
        </div>
    </div>
    </main>

    <!-- taskbar -->
    <footer class="relative flex h-[30px] shrink-0 items-center border-t border-[#3f4247] bg-linear-to-b from-[#7a7d80] via-[#3a3c3e] via-45% to-[#04070a] to-50% font-['Open_Sans',sans-serif] text-[11px] text-white">
        <button aria-label="Пуск" class="absolute left-[9px] -top-[5px]">
            <svg width="42" height="36" viewBox="0 0 42 36">
                <defs><radialGradient id="start" cx=".5" cy=".85" r=".8"><stop offset="0" stop-color="#35c8ee"/><stop offset=".45" stop-color="#1c5f9a"/><stop offset="1" stop-color="#22384d"/></radialGradient></defs>
                <circle cx="21" cy="19" r="19" fill="url(#start)" stroke="#1a2730" stroke-width="2"/>
                <path d="M4 15C9-3 33-3 38 15c-9-2-26 3-34 0z" fill="#cfe0eb" opacity=".65"/>
                <path d="M12 9c3-2 6-2 9 0l-2 9c-3-2-6-2-9 0z" fill="#e8542a"/><path d="M22 10c3 2 6 2 9 0l-2 9c-3 2-6 2-9 0z" fill="#8cc63e"/>
                <path d="M10 19c3-2 6-2 9 0l-2 9c-3-2-6-2-9 0z" fill="#4a9be0"/><path d="M20 20c3 2 6 2 9 0l-2 9c-3 2-6 2-9 0z" fill="#fbc92e"/>
            </svg>
        </button>
        <div class="ml-[65px] flex items-center gap-[7px]">
            <button aria-label="Рабочий стол"><svg width="16" height="13"><path d="M.5.500h15v12H.5z" fill="#3b7bd0" stroke="#c9d6e6"/><path d="M1 8L15 3v6H1z" fill="#6fa9ea"/><path d="M1 10h14v2H1z" fill="#26354b"/><path d="M4 10h4v2H4z" fill="#dfe8f2"/></svg></button>
            <button aria-label="Internet Explorer"><svg width="16" height="16"><path d="M4 8.500h9C13 3 4 3 4 9c0 5 7 5.500 9 2" fill="none" stroke="#41b2ef" stroke-width="2.800"/><path d="M1 15C-1 11 7 0 15 1c1 1 0 3-1 4" fill="none" stroke="#f5c432" stroke-width="1.500"/></svg></button>
            <button aria-label="Проигрыватель"><svg width="16" height="16"><path d="M1 1h14v14H1z" fill="#75c9ee" stroke="#2c83bd"/><circle cx="8" cy="8" r="6" fill="#f08a1d"/><path d="M6 4.500v7L12 8z" fill="#fff"/></svg></button>
            <button aria-label="Переключение окон"><svg width="16" height="14"><path d="M.5.500h15v13H.5z" fill="#1b3f7c" stroke="#b7c5d9"/><path d="M2.500 3.500h5v3h-5zM5.500 6.500h5v3h-5zM8.500 8.500h5v3h-5z" fill="#7aa3d8" stroke="#e7eef8"/></svg></button>
        </div>
        <button class="ml-[11px] flex h-[27px] w-[158px] items-center gap-[4px] rounded-[3px] border border-[#6c6f72] bg-linear-to-b from-[#1a1b1d] to-black pl-[9px]"><svg width="16" height="16"><path d="M4.500.500h9l2 2v13h-11z" fill="#f5fbf5" stroke="#7fa583"/><path d="M6 9h8M6 11h8M6 13h8M10 2v13" stroke="#8fbb93"/><path d="M0 2h10v9H0z" fill="#3b9a44"/><path d="M2.500 4l5 5M7.500 4l-5 5" stroke="#fff" stroke-width="1.500"/></svg>Книга2</button>
        <button class="ml-[2px] flex h-[27px] w-[158px] items-center gap-[4px] rounded-[3px] border border-[#85888c] bg-linear-to-b from-[#8c8f92] via-[#4c4f52] via-45% to-[#1d2023] to-50% pl-[8px]"><svg width="16" height="16"><path d="M4.500.500h9l2 2v13h-11z" fill="#f5f8fd" stroke="#7f94b8"/><path d="M10 4h4M10 6h4M10 8h4M6 12h8M6 14h8" stroke="#7b9bd2"/><path d="M0 2h10v9H0z" fill="#2f5fb8"/><path d="M1.500 4l1.500 5 2-5 2 5 1.500-5" fill="none" stroke="#fff"/></svg>экофак_экоинфор...</button>
        <div class="ml-auto flex items-center pr-[13px] pb-[3px]">
            <span class="mr-[16px]">RU</span>
            <button aria-label="Скрытые значки" class="mr-[7px]"><svg width="7" height="8"><path d="M6 0L2 4l4 4" fill="none" stroke="#fff" stroke-width="2"/></svg></button>
            <svg class="mr-[3px]" width="15" height="15"><path d="M0 0h15v15H0z" fill="#fff"/><path d="M1 1h4v5l5-5h5L8 8l3 3H8L5 9v5H1z" fill="#e1261c"/><path d="M9 6l5 8V8M14 14H6l4-2" fill="none" stroke="#1a1a1a" stroke-width="1.500"/></svg>
            <svg class="mr-[3px]" width="16" height="16"><circle cx="11" cy="5" r="5" fill="#4aa3cc"/><path d="M8 3c3-2 3 2 6 0M8 7h6" stroke="#a7e0c2"/><path d="M2.500 3.500h8v6h-8z" fill="#1a2fa8" stroke="#bcc7da"/><path d="M1 11h9l1 2H0z" fill="#c7cedb"/><path d="M0 14.500h15" stroke="#df8b22" stroke-width="2"/></svg>
            <svg class="mr-[2px]" width="15" height="15"><path d="M.5.500h14v10H.5z" fill="#c2c2c8" stroke="#fff"/><path d="M1 11h13v4H1z" fill="#1c2377"/><path d="M2 13h5M9 13h5" stroke="#fff" stroke-width="2"/></svg>
            <svg class="mr-[14px]" width="15" height="16"><path d="M2 0h5v4H2z" fill="#ddd"/><path d="M1 4h7v8H1z" fill="#8b8b8b"/><path d="M4 12v4" stroke="#aaa" stroke-width="2"/><circle cx="10" cy="11" r="5" fill="#2ba336"/><path d="M7.500 11l2 2 3-4" fill="none" stroke="#fff" stroke-width="1.500"/></svg>
            <svg class="mr-[3px]" width="15" height="16"><path d="M8.500 2.500h5v12h-5z" fill="#a9e8b2" stroke="#fff"/><path d="M9 0h4v2H9z" fill="#fff"/><path d="M2 1v4M6 1v4" stroke="#e8e2a0" stroke-width="1.500"/><path d="M0 5h8v3c0 2-2 3-3 3v4H3v-4C1 11 0 10 0 8z" fill="#fff"/></svg>
            <svg class="mr-[2px]" width="16" height="16"><path d="M4.500.500h9v7h-9z" fill="#1559a8" stroke="#d6ecfb"/><path d="M1 5h9v7H1z" fill="#0c4a96" stroke="#d6ecfb"/><path d="M3 14h5" stroke="#fff" stroke-width="2"/><circle cx="11" cy="11" r="4.500" fill="#2f8fdc"/><path d="M8 10l3-2 1 3 3 1-3 3-2-3z" fill="#5bbf3a"/></svg>
            <svg class="mr-[6px]" width="15" height="14"><path d="M0 4h3l4-4v14l-4-4H0z" fill="#fff"/><path d="M9 5q2 2 0 4M11 3q3 4 0 8M13 1q4 6 0 12" fill="none" stroke="#a8dcae"/></svg>
            <time>11:47</time>
        </div>
    </footer>

    <script>
        const letters = ' ABCDEFGHIJKLMNOPQRST'.split('');
        const data = {
            1: ['', 'затраты', 'выбросы', 'заболев', 'растит', 'кач.жизни'],
            2: ['1', '380', '-1,719', '-0,59', '0,456', '0,467'],
            3: ['2', '280', '-0,127', '0,081', '-0,1', '-0,115'],
            4: ['3', '300', '-0,07', '0,01', '2,139', '1,07'],
            6: ['y1', '-3,8']
        };

        document.getElementById('cols').innerHTML = letters.map((l) => {
            if (l === ' ') return '<col class="w-[26px]">';
            return l === 'F' ? '<col class="w-[77px]">' : '<col class="w-[64px]">';
        }).join('');

        document.getElementById('letters').innerHTML = letters.map((l) => {
            if (l === ' ') return '<th class="border-r border-b border-[#9eb6ce] bg-[#a9c4e9] p-0"><svg class="ml-auto mr-[3px]" width="12" height="12"><path d="M12 0v12H0z" fill="#e4ecf7"/></svg></th>';
            if (l === 'B') return '<th class="border-r border-b border-[#f29536] bg-linear-to-b from-[#f9d99f] to-[#f1c15f] p-0 font-normal">B</th>';
            return `<th class="border-r border-b border-[#9eb6ce] p-0 font-normal">${l}</th>`;
        }).join('');

        let html = '';
        for (let r = 1; r <= 26; r++) {
            const head = r === 6 ? 'border-[#f29536] bg-[#ffd58d]' : 'border-[#9eb6ce] bg-[#e4ecf7]';
            html += `<tr class="h-[21px]"><th class="border-r border-b p-0 pt-[2px] text-center font-['Open_Sans',sans-serif] text-[12px] font-normal text-[#273f4d] ${head}">${r}</th>`;
            for (let c = 0; c < 20; c++) {
                const text = (data[r] || [])[c] || '';
                let cls = 'text-center';
                if (c === 0) cls = 'text-right pr-[2px] font-bold';
                else if (r === 1) cls = 'pl-[2px] font-bold';
                // long heading in F runs over its neighbour, the others are cut off
                const edge = r === 1 && c === 5 ? 'border-b' : 'border-r border-b overflow-hidden';
                if (r === 6 && c === 1) {
                    html += `<td class="relative border-r border-b border-[#d0d7e5] p-0 pt-[2px] pr-[2px] text-right">${text}<div class="absolute -top-[2px] -left-[2px] -right-[2px] -bottom-[2px] border-2 border-black"></div><div class="absolute -right-[3px] -bottom-[3px] h-[6px] w-[6px] border-t border-l border-white bg-black"></div></td>`;
                } else {
                    html += `<td class="border-[#d0d7e5] p-0 pt-[2px] whitespace-nowrap ${edge} ${cls}">${text}</td>`;
                }
            }
            html += '</tr>';
        }
        document.getElementById('rows').innerHTML = html;
    </script>

</body>
</html>
